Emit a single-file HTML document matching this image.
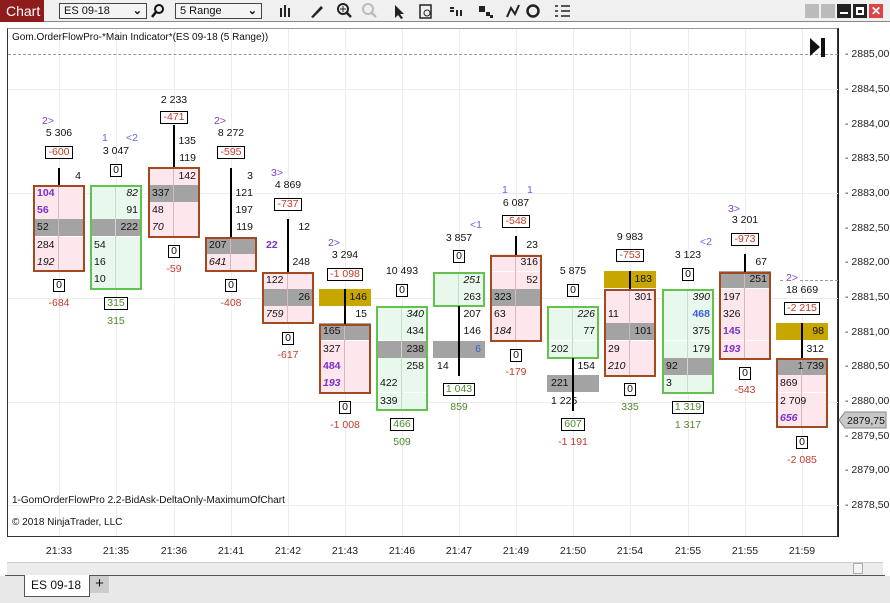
<!DOCTYPE html>
<html><head><meta charset="utf-8"><style>
*{margin:0;padding:0;box-sizing:border-box}
body{width:890px;height:603px;background:#fff;font-family:"Liberation Sans",sans-serif;font-size:10.5px;color:#111;position:relative;overflow:hidden}
.abs{position:absolute}
#tb{left:0;top:0;width:890px;height:22px;background:#f0f0f0;border-bottom:1px solid #888}
#chart{left:7px;top:28px;width:831px;height:509px;background:#fff;border:1px solid #333;border-top:1px solid #999}
#axis{left:838px;top:28px;width:52px;height:509px;background:#fff;border-left:1px solid #222}
.vg{position:absolute;top:29px;width:1px;height:507px;background:#ececec}
.hg{position:absolute;left:8px;width:830px;height:1px;background:#ececec}
.k{position:absolute;top:0;width:52px;height:1px}
.r{position:absolute;left:0;width:52px;height:17px;display:flex;justify-content:space-between;align-items:center;padding:0 4px 0 4px;line-height:17px}
.r span{position:relative;z-index:3}
.pk{background:#fde6ec}.gr{background:#e9f8ec}.gy{background:#a3a3a3}.gd{background:#c7a600}
.bx{position:absolute;left:0;width:52px;z-index:2}
.bx.red{border:2px solid #a3481f}.bx.grn{border:2px solid #62c24e}
.md{position:absolute;left:25px;width:1px;background:#d8b8c0;z-index:1}
.w{position:absolute;left:25px;width:2px;background:#000;z-index:2}
.t{position:absolute;left:-20px;width:92px;text-align:center;line-height:13px;white-space:nowrap}
.s{position:absolute;line-height:13px;white-space:nowrap}
.b{display:inline-block;border:1px solid #000;padding:0 2px;line-height:11px;background:#fff}
.neg{color:#c43a2a}.pos{color:#4d8a2a}
.p{color:#7a2fd0;font-weight:bold}.bl{color:#3a5fd8;font-weight:bold}
.pu{color:#7a3fd0}.bu{color:#5a6ee0}
.pl{position:absolute;font-size:10.5px;color:#222;left:845px}
.tl{position:absolute;top:545px;font-size:10.5px;color:#222;width:40px;text-align:center}
</style></head><body>
<div class="abs" id="tb"></div>
<div class="abs" style="left:0;top:0;width:44px;height:22px;background:#8e1c1c;color:#fff;font-size:14px;line-height:22px;padding-left:6px">Chart</div>
<div class="abs" style="left:59px;top:3px;width:88px;height:16px;border:1px solid #444;background:#f4f4f4;font-size:11px;line-height:14px;padding-left:4px">ES 09-18<span style="position:absolute;right:4px;font-weight:bold">⌄</span></div>
<svg class="abs" style="left:150px;top:3px" width="16" height="16"><circle cx="9" cy="6" r="4" fill="none" stroke="#111" stroke-width="2"/><path d="M6 9 L2 14" stroke="#111" stroke-width="2.5"/></svg>
<div class="abs" style="left:175px;top:3px;width:87px;height:16px;border:1px solid #444;background:#f4f4f4;font-size:11px;line-height:14px;padding-left:4px">5 Range<span style="position:absolute;right:4px;font-weight:bold">⌄</span></div>
<svg class="abs" style="left:275px;top:2px" width="300" height="18">
<g fill="#222"><rect x="5" y="6" width="2" height="9"/><rect x="9" y="3" width="2" height="12"/><rect x="13" y="6" width="2" height="9"/></g>
<path d="M36 15 L46 4 L48 6 L38 16 Z" fill="#222"/>
<circle cx="68" cy="7" r="5" fill="none" stroke="#222" stroke-width="2"/><path d="M72 11 L76 15" stroke="#222" stroke-width="2.5"/><path d="M65 7h6M68 4v6" stroke="#222"/>
<circle cx="93" cy="7" r="5" fill="none" stroke="#bbb" stroke-width="2"/><path d="M97 11 L101 15" stroke="#bbb" stroke-width="2.5"/>
<path d="M120 3 L120 16 L123 13 L126 17 L128 16 L125 12 L129 12 Z" fill="#222"/>
<rect x="145" y="3" width="11" height="13" fill="none" stroke="#222" stroke-width="1.5"/><circle cx="152" cy="11" r="3" fill="none" stroke="#222"/>
<path d="M175 6h4M175 9h4" stroke="#222" stroke-width="2"/><rect x="181" y="8" width="2" height="6" fill="#222"/><rect x="185" y="8" width="2" height="6" fill="#222"/>
<rect x="204" y="4" width="6" height="6" fill="#222"/><rect x="211" y="10" width="4" height="4" fill="#222"/><rect x="215" y="13" width="3" height="3" fill="#222"/>
<path d="M232 15 L236 6 L240 12 L244 3" stroke="#222" stroke-width="2" fill="none"/>
<circle cx="258" cy="9" r="5.5" fill="none" stroke="#222" stroke-width="2.5"/>
<path d="M280 4h3M280 9h3M280 14h3M286 4h9M286 9h9M286 14h9" stroke="#222" stroke-width="1.5"/>
</svg>
<div class="abs" style="left:805px;top:4px;width:14px;height:14px;background:#bbb"></div>
<div class="abs" style="left:821px;top:4px;width:14px;height:14px;background:#bbb"></div>
<div class="abs" style="left:837px;top:4px;width:14px;height:14px;background:#222"><div style="margin:8px 3px 0;height:2px;background:#fff"></div></div>
<div class="abs" style="left:853px;top:4px;width:14px;height:14px;background:#222"><div style="margin:3px;height:8px;border:2px solid #fff;border-top-width:3px"></div></div>
<div class="abs" style="left:869px;top:4px;width:14px;height:14px;background:#d44;color:#fff;font-size:12px;line-height:14px;text-align:center;font-weight:bold">✕</div>

<div class="abs" id="chart"></div>
<div class="abs" id="axis"></div>
<div class="vg" style="left:59px"></div><div class="vg" style="left:116px"></div><div class="vg" style="left:174px"></div><div class="vg" style="left:231px"></div><div class="vg" style="left:288px"></div><div class="vg" style="left:345px"></div><div class="vg" style="left:402px"></div><div class="vg" style="left:459px"></div><div class="vg" style="left:516px"></div><div class="vg" style="left:573px"></div><div class="vg" style="left:630px"></div><div class="vg" style="left:688px"></div><div class="vg" style="left:745px"></div><div class="vg" style="left:802px"></div>
<div class="hg" style="top:89px"></div><div class="hg" style="top:193px"></div><div class="hg" style="top:298px"></div><div class="hg" style="top:402px"></div><div class="hg" style="top:505px"></div>
<div class="abs" style="left:8px;top:54px;width:830px;border-top:1px dashed #999"></div>
<div class="abs" style="left:12px;top:32px;font-size:10px">Gom.OrderFlowPro-*Main Indicator*(ES 09-18 (5 Range))</div>
<svg class="abs" style="left:809px;top:37px" width="18" height="22"><path d="M1 1 L11 10 L1 19 Z" fill="#111"/><rect x="12" y="1" width="4" height="19" fill="#111"/></svg>
<div class="abs" style="left:12px;top:495px;font-size:10px">1-GomOrderFlowPro 2.2-BidAsk-DeltaOnly-MaximumOfChart</div>
<div class="abs" style="left:12px;top:517px;font-size:10px">© 2018 NinjaTrader, LLC</div>

<div class="pl" style="top:48px">- 2885,00</div><div class="pl" style="top:83px">- 2884,50</div><div class="pl" style="top:118px">- 2884,00</div><div class="pl" style="top:152px">- 2883,50</div><div class="pl" style="top:187px">- 2883,00</div><div class="pl" style="top:222px">- 2882,50</div><div class="pl" style="top:256px">- 2882,00</div><div class="pl" style="top:291px">- 2881,50</div><div class="pl" style="top:326px">- 2881,00</div><div class="pl" style="top:360px">- 2880,50</div><div class="pl" style="top:395px">- 2880,00</div><div class="pl" style="top:430px">- 2879,50</div><div class="pl" style="top:464px">- 2879,00</div><div class="pl" style="top:499px">- 2878,50</div>
<div class="abs" style="left:780px;top:280px;width:58px;border-top:1px dashed #999"></div>
<svg class="abs" style="left:838px;top:411px" width="50" height="18"><path d="M1 9 L7 1 H48 V17 H7 Z" fill="#c8c8c8" stroke="#888"/><text x="9" y="13" font-family="Liberation Sans" font-size="10.5" fill="#111">2879,75</text></svg>

<div class="tl" style="left:39px">21:33</div><div class="tl" style="left:96px">21:35</div><div class="tl" style="left:154px">21:36</div><div class="tl" style="left:211px">21:41</div><div class="tl" style="left:268px">21:42</div><div class="tl" style="left:325px">21:43</div><div class="tl" style="left:382px">21:46</div><div class="tl" style="left:439px">21:47</div><div class="tl" style="left:496px">21:49</div><div class="tl" style="left:553px">21:50</div><div class="tl" style="left:610px">21:54</div><div class="tl" style="left:668px">21:55</div><div class="tl" style="left:725px">21:55</div><div class="tl" style="left:782px">21:59</div>
<div class="abs" style="left:7px;top:562px;width:876px;height:13px;background:#ececec;border-top:1px solid #ccc"></div>
<div class="abs" style="left:853px;top:563px;width:10px;height:11px;border:1px solid #aaa;background:#f4f4f4"></div>
<div class="abs" style="left:0;top:576px;width:890px;height:27px;background:#e8e8e8"></div>
<div class="abs" style="left:5px;top:575px;width:880px;height:1px;background:#555"></div>
<div class="abs" style="left:24px;top:575px;width:66px;height:22px;background:#fff;border:1px solid #555;border-top:none;font-size:12px;line-height:20px;padding-left:6px">ES 09-18</div>
<div class="abs" style="left:90px;top:576px;width:19px;height:17px;background:#ccc;font-size:15px;line-height:16px;text-align:center">+</div>

<!-- C1 -->
<div class="k" style="left:33px">
<div class="s pu" style="top:115px;left:9px">2&gt;</div>
<div class="t" style="top:127px">5 306</div>
<div class="t" style="top:146px"><span class="b neg">-600</span></div>
<div class="w" style="top:168px;height:18px"></div>
<div class="r" style="top:168px"><span></span><span>4</span></div>
<div class="bx red" style="top:185px;height:87px"></div><div class="md" style="top:185px;height:87px"></div>
<div class="r pk" style="top:185px"><span class="p">104</span><span></span></div>
<div class="r pk" style="top:202px"><span class="p">56</span><span></span></div>
<div class="r gy" style="top:219px"><span>52</span><span></span></div>
<div class="r pk" style="top:237px"><span>284</span><span></span></div>
<div class="r pk" style="top:254px"><span><i>192</i></span><span></span></div>
<div class="t" style="top:279px"><span class="b">0</span></div>
<div class="t neg" style="top:297px">-684</div>
</div>
<!-- C2 -->
<div class="k" style="left:90px">
<div class="s bu" style="top:132px;left:12px">1</div>
<div class="s bu" style="top:132px;left:36px">&lt;2</div>
<div class="t" style="top:145px">3 047</div>
<div class="t" style="top:164px"><span class="b">0</span></div>
<div class="bx grn" style="top:185px;height:105px"></div><div class="md" style="top:185px;height:105px;background:#c8dcc8"></div>
<div class="r gr" style="top:185px"><span></span><span><i>82</i></span></div>
<div class="r gr" style="top:202px"><span></span><span>91</span></div>
<div class="r gy" style="top:219px"><span></span><span>222</span></div>
<div class="r gr" style="top:237px"><span>54</span><span></span></div>
<div class="r gr" style="top:254px"><span>16</span><span></span></div>
<div class="r gr" style="top:271px"><span>10</span><span></span></div>
<div class="t pos" style="top:297px"><span class="b pos">315</span></div>
<div class="t pos" style="top:315px">315</div>
</div>
<!-- C3 -->
<div class="k" style="left:148px">
<div class="t" style="top:94px">2 233</div>
<div class="t" style="top:111px"><span class="b neg">-471</span></div>
<div class="w" style="top:125px;height:44px"></div>
<div class="r" style="top:133px"><span></span><span>135</span></div>
<div class="r" style="top:150px"><span></span><span>119</span></div>
<div class="bx red" style="top:167px;height:71px"></div><div class="md" style="top:167px;height:71px"></div>
<div class="r pk" style="top:168px"><span></span><span>142</span></div>
<div class="r gy" style="top:185px"><span>337</span><span></span></div>
<div class="r pk" style="top:202px"><span>48</span><span></span></div>
<div class="r pk" style="top:219px"><span><i>70</i></span><span></span></div>
<div class="t" style="top:245px"><span class="b">0</span></div>
<div class="t neg" style="top:263px">-59</div>
</div>
<!-- C4 -->
<div class="k" style="left:205px">
<div class="s pu" style="top:115px;left:9px">2&gt;</div>
<div class="t" style="top:127px">8 272</div>
<div class="t" style="top:146px"><span class="b neg">-595</span></div>
<div class="w" style="top:168px;height:70px"></div>
<div class="r" style="top:168px"><span></span><span>3</span></div>
<div class="r" style="top:185px"><span></span><span>121</span></div>
<div class="r" style="top:202px"><span></span><span>197</span></div>
<div class="r" style="top:219px"><span></span><span>119</span></div>
<div class="bx red" style="top:237px;height:35px"></div><div class="md" style="top:237px;height:35px"></div>
<div class="r gy" style="top:237px"><span>207</span><span></span></div>
<div class="r pk" style="top:254px"><span><i>641</i></span><span></span></div>
<div class="t" style="top:279px"><span class="b">0</span></div>
<div class="t neg" style="top:297px">-408</div>
</div>
<!-- C5 -->
<div class="k" style="left:262px">
<div class="s pu" style="top:167px;left:9px">3&gt;</div>
<div class="t" style="top:179px">4 869</div>
<div class="t" style="top:198px"><span class="b neg">-737</span></div>
<div class="w" style="top:219px;height:54px"></div>
<div class="r" style="top:219px"><span></span><span>12</span></div>
<div class="r" style="top:237px"><span class="p">22</span><span></span></div>
<div class="r" style="top:254px"><span></span><span>248</span></div>
<div class="bx red" style="top:272px;height:52px"></div><div class="md" style="top:272px;height:52px"></div>
<div class="r pk" style="top:272px"><span>122</span><span></span></div>
<div class="r gy" style="top:289px"><span></span><span>26</span></div>
<div class="r pk" style="top:306px"><span><i>759</i></span><span></span></div>
<div class="t" style="top:332px"><span class="b">0</span></div>
<div class="t neg" style="top:349px">-617</div>
</div>
<!-- C6 -->
<div class="k" style="left:319px">
<div class="s pu" style="top:237px;left:9px">2&gt;</div>
<div class="t" style="top:249px">3 294</div>
<div class="t" style="top:268px"><span class="b neg">-1 098</span></div>
<div class="r gd" style="top:289px"><span></span><span>146</span></div>
<div class="r" style="top:306px"><span></span><span>15</span></div>
<div class="w" style="top:289px;height:36px"></div>
<div class="bx red" style="top:324px;height:70px"></div><div class="md" style="top:324px;height:70px"></div>
<div class="r gy" style="top:323px"><span>165</span><span></span></div>
<div class="r pk" style="top:341px"><span>327</span><span></span></div>
<div class="r pk" style="top:358px"><span class="p">484</span><span></span></div>
<div class="r pk" style="top:375px"><span class="p"><i>193</i></span><span></span></div>
<div class="t" style="top:401px"><span class="b">0</span></div>
<div class="t neg" style="top:419px">-1 008</div>
</div>
<!-- C7 -->
<div class="k" style="left:376px">
<div class="t" style="top:265px">10 493</div>
<div class="t" style="top:284px"><span class="b">0</span></div>
<div class="bx grn" style="top:306px;height:105px"></div><div class="md" style="top:306px;height:105px;background:#c8dcc8"></div>
<div class="r gr" style="top:306px"><span></span><span><i>340</i></span></div>
<div class="r gr" style="top:323px"><span></span><span>434</span></div>
<div class="r gy" style="top:341px"><span></span><span>238</span></div>
<div class="r gr" style="top:358px"><span></span><span>258</span></div>
<div class="r gr" style="top:375px"><span>422</span><span></span></div>
<div class="r gr" style="top:393px"><span>339</span><span></span></div>
<div class="t" style="top:418px"><span class="b pos">466</span></div>
<div class="t pos" style="top:436px">509</div>
</div>
<!-- C8 -->
<div class="k" style="left:433px">
<div class="s bu" style="top:219px;left:37px">&lt;1</div>
<div class="t" style="top:232px">3 857</div>
<div class="t" style="top:250px"><span class="b">0</span></div>
<div class="bx grn" style="top:272px;height:35px"></div><div class="md" style="top:272px;height:35px;background:#c8dcc8"></div>
<div class="r gr" style="top:272px"><span></span><span><i>251</i></span></div>
<div class="r gr" style="top:289px"><span></span><span>263</span></div>
<div class="r" style="top:306px"><span></span><span>207</span></div>
<div class="r" style="top:323px"><span></span><span>146</span></div>
<div class="r gy" style="top:341px"><span></span><span style="color:#3a5fd8">6</span></div>
<div class="r" style="top:358px"><span>14</span><span></span></div>
<div class="w" style="top:306px;height:70px"></div>
<div class="t" style="top:383px"><span class="b pos">1 043</span></div>
<div class="t pos" style="top:401px">859</div>
</div>
<!-- C9 -->
<div class="k" style="left:490px">
<div class="s bu" style="top:184px;left:12px">1</div>
<div class="s bu" style="top:184px;left:37px">1</div>
<div class="t" style="top:197px">6 087</div>
<div class="t" style="top:215px"><span class="b neg">-548</span></div>
<div class="w" style="top:236px;height:20px"></div>
<div class="r" style="top:237px"><span></span><span>23</span></div>
<div class="bx red" style="top:255px;height:87px"></div><div class="md" style="top:255px;height:87px"></div>
<div class="r pk" style="top:254px"><span></span><span>316</span></div>
<div class="r pk" style="top:272px"><span></span><span>52</span></div>
<div class="r gy" style="top:289px"><span>323</span><span></span></div>
<div class="r pk" style="top:306px"><span>63</span><span></span></div>
<div class="r pk" style="top:323px"><span><i>184</i></span><span></span></div>
<div class="t" style="top:349px"><span class="b">0</span></div>
<div class="t neg" style="top:366px">-179</div>
</div>
<!-- C10 -->
<div class="k" style="left:547px">
<div class="t" style="top:265px">5 875</div>
<div class="t" style="top:284px"><span class="b">0</span></div>
<div class="bx grn" style="top:306px;height:53px"></div><div class="md" style="top:306px;height:53px;background:#c8dcc8"></div>
<div class="r gr" style="top:306px"><span></span><span><i>226</i></span></div>
<div class="r gr" style="top:323px"><span></span><span>77</span></div>
<div class="r gr" style="top:341px"><span>202</span><span></span></div>
<div class="r" style="top:358px"><span></span><span>154</span></div>
<div class="r gy" style="top:375px"><span>221</span><span></span></div>
<div class="r" style="top:393px"><span>1 225</span><span></span></div>
<div class="w" style="top:358px;height:53px"></div>
<div class="t" style="top:418px"><span class="b pos">607</span></div>
<div class="t neg" style="top:436px">-1 191</div>
</div>
<!-- C11 -->
<div class="k" style="left:604px">
<div class="t" style="top:231px">9 983</div>
<div class="t" style="top:249px"><span class="b neg">-753</span></div>
<div class="r gd" style="top:271px"><span></span><span>183</span></div>
<div class="w" style="top:271px;height:19px"></div>
<div class="bx red" style="top:289px;height:88px"></div><div class="md" style="top:289px;height:88px"></div>
<div class="r pk" style="top:289px"><span></span><span>301</span></div>
<div class="r pk" style="top:306px"><span>11</span><span></span></div>
<div class="r gy" style="top:323px"><span></span><span>101</span></div>
<div class="r pk" style="top:341px"><span>29</span><span></span></div>
<div class="r pk" style="top:358px"><span><i>210</i></span><span></span></div>
<div class="t" style="top:383px"><span class="b">0</span></div>
<div class="t pos" style="top:401px">335</div>
</div>
<!-- C12 -->
<div class="k" style="left:662px">
<div class="s bu" style="top:236px;left:38px">&lt;2</div>
<div class="t" style="top:249px">3 123</div>
<div class="t" style="top:268px"><span class="b">0</span></div>
<div class="bx grn" style="top:289px;height:105px"></div><div class="md" style="top:289px;height:105px;background:#c8dcc8"></div>
<div class="r gr" style="top:289px"><span></span><span><i>390</i></span></div>
<div class="r gr" style="top:306px"><span></span><span class="bl">468</span></div>
<div class="r gr" style="top:323px"><span></span><span>375</span></div>
<div class="r gr" style="top:341px"><span></span><span>179</span></div>
<div class="r gy" style="top:358px"><span>92</span><span></span></div>
<div class="r gr" style="top:375px"><span>3</span><span></span></div>
<div class="t" style="top:401px"><span class="b pos">1 319</span></div>
<div class="t pos" style="top:419px">1 317</div>
</div>
<!-- C13 -->
<div class="k" style="left:719px">
<div class="s pu" style="top:203px;left:9px">3&gt;</div>
<div class="t" style="top:214px">3 201</div>
<div class="t" style="top:233px"><span class="b neg">-973</span></div>
<div class="w" style="top:254px;height:19px"></div>
<div class="r" style="top:254px"><span></span><span>67</span></div>
<div class="bx red" style="top:272px;height:88px"></div><div class="md" style="top:272px;height:88px"></div>
<div class="r gy" style="top:271px"><span></span><span>251</span></div>
<div class="r pk" style="top:289px"><span>197</span><span></span></div>
<div class="r pk" style="top:306px"><span>326</span><span></span></div>
<div class="r pk" style="top:323px"><span class="p">145</span><span></span></div>
<div class="r pk" style="top:341px"><span class="p"><i>193</i></span><span></span></div>
<div class="t" style="top:367px"><span class="b">0</span></div>
<div class="t neg" style="top:384px">-543</div>
</div>
<!-- C14 -->
<div class="k" style="left:776px">
<div class="s pu" style="top:272px;left:9px;background:#fff;padding:0 1px">2&gt;</div>
<div class="t" style="top:284px">18 669</div>
<div class="t" style="top:302px"><span class="b neg">-2 215</span></div>
<div class="r gd" style="top:323px"><span></span><span>98</span></div>
<div class="r" style="top:341px"><span></span><span>312</span></div>
<div class="w" style="top:323px;height:36px"></div>
<div class="bx red" style="top:358px;height:70px"></div><div class="md" style="top:358px;height:70px"></div>
<div class="r gy" style="top:358px"><span></span><span>1 739</span></div>
<div class="r pk" style="top:375px"><span>869</span><span></span></div>
<div class="r pk" style="top:393px"><span>2 709</span><span></span></div>
<div class="r pk" style="top:410px"><span class="p"><i>656</i></span><span></span></div>
<div class="t" style="top:436px"><span class="b">0</span></div>
<div class="t neg" style="top:454px">-2 085</div>
</div>
</body></html>
